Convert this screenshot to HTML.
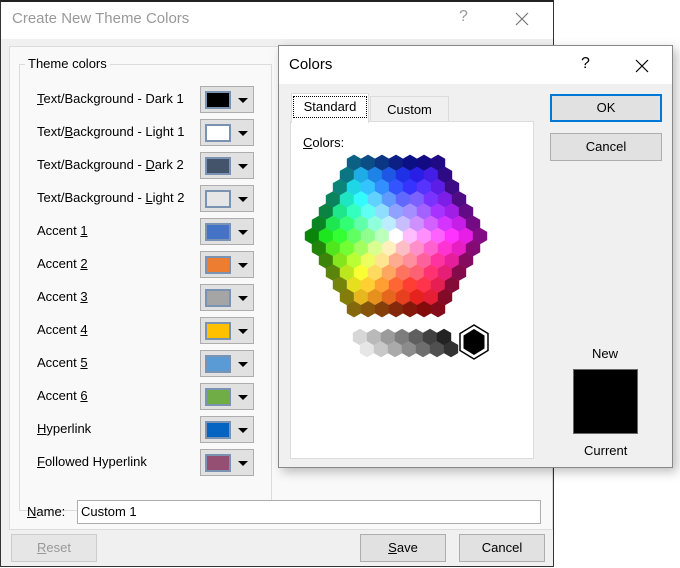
<!DOCTYPE html>
<html><head><meta charset="utf-8"><style>
*{box-sizing:border-box;margin:0;padding:0}
body{width:680px;height:568px;background:#fff;font-family:"Segoe UI","Liberation Sans",sans-serif;font-size:12.5px;color:#000;position:relative;overflow:hidden}
.abs{position:absolute}
u{text-decoration:underline}
#d1{left:0;top:0;width:554px;height:567px;border:1px solid #333;border-top:2px solid #222;background:#f0f0f0}
#d1 .title{left:0;top:0;width:552px;height:37px;background:#fff}
#d1 .title span{position:absolute;left:11px;top:8px;font-size:15px;color:#999}
.inner{left:9px;top:46px;width:544px;height:484px;background:#f9f9f9;border:1px solid #dcdcdc}
.group{left:19px;top:64px;width:253px;height:447px;border:1px solid #dcdcdc}
.glabel{left:25px;top:56px;background:#f9f9f9;padding:0 3px;font-size:13px}
.lbl{left:37px;font-size:13px}
.sw{left:200px;width:54px;height:27px;background:#e1e1e1;border:1px solid #adadad}
.sw i{position:absolute;left:4px;top:4px;width:26px;height:18px;border:2px solid #7a93b3}
.sw b{position:absolute;left:37px;top:11px;width:0;height:0;border-left:5px solid transparent;border-right:5px solid transparent;border-top:5px solid #000}
.btn{background:#e1e1e1;border:1px solid #adadad;text-align:center;font-size:13px;line-height:25px}
#d2{left:278px;top:45px;width:395px;height:423px;border:1px solid #888;background:#f0f0f0;box-shadow:4px 4px 10px rgba(0,0,0,.25)}
</style></head><body>
<div id="d1" class="abs">
 <div class="abs title"><span>Create New Theme Colors</span>
  <span style="left:458px;top:6px;font-size:16px">?</span>
  <svg style="position:absolute;left:514px;top:10px" width="14" height="14"><path d="M1 1L13 13M13 1L1 13" stroke="#777" stroke-width="1.2"/></svg></div>
</div>
<div class="abs inner"></div>
<div class="abs group"></div>
<div class="abs glabel">Theme colors</div>

<div class="abs lbl" style="top:91px"><u>T</u>ext/Background - Dark 1</div>
<div class="abs sw" style="top:86px"><i style="background:#000"></i><b></b></div>
<div class="abs lbl" style="top:124px">Text/<u>B</u>ackground - Light 1</div>
<div class="abs sw" style="top:119px"><i style="background:#fff"></i><b></b></div>
<div class="abs lbl" style="top:157px">Text/Background - <u>D</u>ark 2</div>
<div class="abs sw" style="top:152px"><i style="background:#44546a"></i><b></b></div>
<div class="abs lbl" style="top:190px">Text/Background - <u>L</u>ight 2</div>
<div class="abs sw" style="top:185px"><i style="background:#e7e6e6"></i><b></b></div>
<div class="abs lbl" style="top:223px">Accent <u>1</u></div>
<div class="abs sw" style="top:218px"><i style="background:#4472c4"></i><b></b></div>
<div class="abs lbl" style="top:256px">Accent <u>2</u></div>
<div class="abs sw" style="top:251px"><i style="background:#ed7d31"></i><b></b></div>
<div class="abs lbl" style="top:289px">Accent <u>3</u></div>
<div class="abs sw" style="top:284px"><i style="background:#a5a5a5"></i><b></b></div>
<div class="abs lbl" style="top:322px">Accent <u>4</u></div>
<div class="abs sw" style="top:317px"><i style="background:#ffc000"></i><b></b></div>
<div class="abs lbl" style="top:355px">Accent <u>5</u></div>
<div class="abs sw" style="top:350px"><i style="background:#5b9bd5"></i><b></b></div>
<div class="abs lbl" style="top:388px">Accent <u>6</u></div>
<div class="abs sw" style="top:383px"><i style="background:#70ad47"></i><b></b></div>
<div class="abs lbl" style="top:421px"><u>H</u>yperlink</div>
<div class="abs sw" style="top:416px"><i style="background:#0563c1"></i><b></b></div>
<div class="abs lbl" style="top:454px"><u>F</u>ollowed Hyperlink</div>
<div class="abs sw" style="top:449px"><i style="background:#954f72"></i><b></b></div>

<div class="abs" style="left:27px;top:504px;font-size:13px"><u>N</u>ame:</div>
<div class="abs" style="left:77px;top:500px;width:464px;height:24px;background:#fff;border:1px solid #adadad;padding:3px 3px;font-size:13px">Custom 1</div>
<div class="abs btn" style="left:11px;top:534px;width:86px;height:28px;color:#999;border-color:#ccc;background:#e6e6e6"><u>R</u>eset</div>
<div class="abs btn" style="left:360px;top:534px;width:86px;height:28px"><u>S</u>ave</div>
<div class="abs btn" style="left:459px;top:534px;width:86px;height:28px">Cancel</div>

<div id="d2" class="abs">
 <div class="abs" style="left:0;top:0;width:393px;height:38px;background:#fff"></div>
 <div class="abs" style="left:10px;top:10px;font-size:15px">Colors</div>
 <div class="abs" style="left:302px;top:9px;font-size:16px">?</div>
 <svg style="position:absolute;left:356px;top:13px" width="14" height="14"><path d="M1 1L13 13M13 1L1 13" stroke="#000" stroke-width="1.2"/></svg>
 <div class="abs" style="left:91px;top:50px;width:79px;height:26px;border:1px solid #dcdcdc;border-bottom:none;background:#f0f0f0;text-align:center;line-height:26px;font-size:13px">Custom</div>
 <div class="abs" style="left:11px;top:75px;width:244px;height:338px;background:#fff;border:1px solid #dcdcdc"></div>
 <div class="abs" style="left:12px;top:47px;width:78px;height:30px;background:#fff;border:1px solid #dcdcdc;border-bottom:none"></div>
 <div class="abs" style="left:14px;top:50px;width:74px;height:22px;border:1px dotted #000;text-align:center;line-height:20px;font-size:13px">Standard</div>
 <div class="abs" style="left:24px;top:89px;font-size:13px"><u>C</u>olors:</div>
 <div class="abs btn" style="left:271px;top:48px;width:112px;height:28px;border:2px solid #0078d7;line-height:24px">OK</div>
 <div class="abs btn" style="left:271px;top:87px;width:112px;height:28px">Cancel</div>
 <div class="abs" style="left:313px;top:300px;font-size:13px">New</div>
 <div class="abs" style="left:294px;top:323px;width:65px;height:65px;background:#000;border:1px solid #666"></div>
 <div class="abs" style="left:305px;top:397px;font-size:13px">Current</div>
</div>
<svg class="abs" id="hx" style="left:0;top:0" width="680" height="568"></svg>
<script>
var s=document.getElementById('hx'),h='';
function hex(cx,cy,c,w,hh){w=w||7.2;hh=hh||8.2;var p=[[cx,cy-hh],[cx+w,cy-hh/2],[cx+w,cy+hh/2],[cx,cy+hh],[cx-w,cy+hh/2],[cx-w,cy-hh/2]].map(function(a){return a.join(',')}).join(' ');return '<polygon points="'+p+'" fill="'+c+'"/>';}
var KA=[0,90,180,270,360],KH=[300,375,480,590,660];
function hueOf(a){for(var k=0;k<4;k++){if(a<=KA[k+1]){var t=(a-KA[k])/90;return (KH[k]+t*(KH[k+1]-KH[k]))%360;}}return 300;}
var CX=396,CY=236,W=14,P=12.2;
for(var r=-6;r<=6;r++){var n=13-Math.abs(r);for(var i=0;i<n;i++){var x=CX+(i-(n-1)/2)*W,y=CY+r*P;
var dx=(x-CX)/W,dy=(y-CY)/P;var d=Math.max(Math.abs(dy),(Math.abs(dx)*2+Math.abs(dy))/2);
var ang=Math.atan2(dy,dx)*180/Math.PI;if(ang<0)ang+=360;var hue=hueOf(ang);
var l=d<0.5?100:Math.max(25,96-d*9);var sat=d<0.5?0:100;
if(d>4.5)sat=80;
if(d>5.5){l=28;sat=85;}
h+=hex(x,y,'hsl('+hue+','+sat+'%,'+l+'%)');}}
for(var i=0;i<7;i++){var g=215-i*30;h+=hex(360+i*14,337,'rgb('+g+','+g+','+g+')');var g2=230-i*30;h+=hex(367+i*14,349,'rgb('+g2+','+g2+','+g2+')');}
h+=hex(474,342,'#000',14,17).replace('fill="#000"','fill="#fff" stroke="#000" stroke-width="1.5"');
h+=hex(474,342,'#000',10.5,13);
s.innerHTML=h;
</script>
</body></html>
